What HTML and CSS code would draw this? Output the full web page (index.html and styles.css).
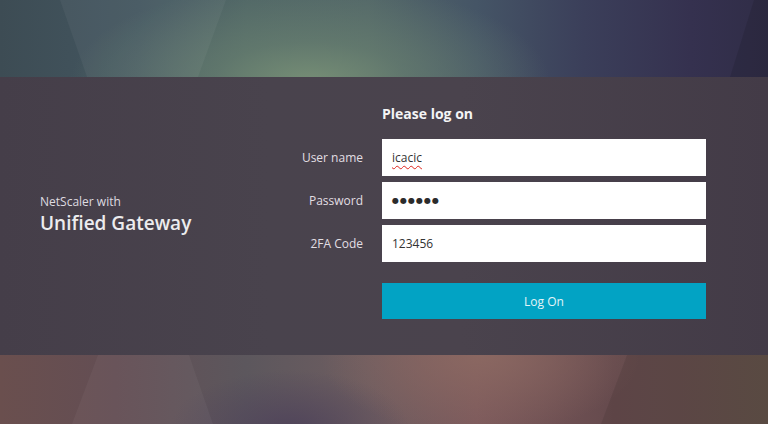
FILE: index.html
```html
<!DOCTYPE html>
<html lang="en">
<head>
<meta charset="utf-8">
<title>NetScaler Gateway</title>
<link rel="stylesheet" href="styles.css">
</head>
<body>
<div class="page">
  <div class="band band-top">
    <div class="shape top-light"></div>
    <div class="shape top-dark"></div>
  </div>
  <main class="panel">
    <section class="brand">
      <div class="brand-small">NetScaler with</div>
      <div class="brand-large">Unified Gateway</div>
    </section>
    <section class="login">
      <h1 class="login-title">Please log on</h1>
      <form class="form">
        <label class="label">User name</label>
        <div class="field"><span class="misspelled">icacic</span></div>
        <label class="label">Password</label>
        <div class="field field-pass">●●●●●●</div>
        <label class="label">2FA Code</label>
        <div class="field">123456</div>
        <div class="button-row">
          <button type="button" class="btn">Log On</button>
        </div>
      </form>
    </section>
  </main>
  <div class="band band-bottom">
    <div class="shape bot-light"></div>
    <div class="shape bot-dark"></div>
  </div>
</div>
</body>
</html>
```

FILE: styles.css
```css
html, body {
  margin: 0;
  padding: 0;
}
body {
  width: 768px;
  height: 424px;
  overflow: hidden;
  font-family: "Open Sans", "Noto Sans", "DejaVu Sans", sans-serif;
  background: #463f4a;
}
.page {
  display: flex;
  flex-direction: column;
  width: 768px;
  height: 424px;
}
.band {
  position: relative;
  overflow: hidden;
  flex: none;
}
.band-top {
  height: 77px;
  background:
    radial-gradient(ellipse 240px 100px at 310px 82px, rgba(120,144,118,0.95) 0%, rgba(108,132,113,0.6) 40%, rgba(90,110,105,0) 100%),
    linear-gradient(to right, #3d4c54 0%, #435660 18%, #4f6566 32%, #526668 48%, #455566 62%, #3b3f5a 76%, #35314f 90%, #302d47 100%);
}
.band-bottom {
  height: 69px;
  background:
    radial-gradient(ellipse 160px 80px at 480px 0px, rgba(140,105,98,0.9) 0%, rgba(140,105,98,0) 100%),
    radial-gradient(ellipse 120px 60px at 290px 75px, rgba(78,66,90,0.9) 0%, rgba(78,66,90,0) 100%),
    linear-gradient(to right, #6a4f4e 0%, #634e54 15%, #5c575d 32%, #6e5d60 48%, #7d5a5c 62%, #654a4d 80%, #615148 100%);
}
.shape {
  position: absolute;
  inset: 0;
}
.top-light {
  background: rgba(255,255,255,0.045);
  clip-path: polygon(60px 0, 226px 0, 198px 77px, 87px 77px);
}
.top-dark {
  background: rgba(0,0,0,0.1);
  clip-path: polygon(754px 0, 768px 0, 768px 77px, 730px 77px);
}
.bot-light {
  background: rgba(255,255,255,0.04);
  clip-path: polygon(98px 0, 189px 0, 213px 69px, 72px 69px);
}
.bot-dark {
  background: rgba(0,0,0,0.08);
  clip-path: polygon(627px 0, 768px 0, 768px 69px, 601px 69px);
}

.panel {
  flex: none;
  height: 278px;
  box-sizing: border-box;
  display: flex;
  align-items: stretch;
  padding: 0 0 0 40px;
  background: linear-gradient(to right, #453e49 0%, #49434d 35%, #4a434d 60%, #433b47 100%);
}
.brand {
  width: 203px;
  display: flex;
  flex-direction: column;
  justify-content: center;
  padding-bottom: 2px;
  box-sizing: border-box;
}
.brand-small {
  font-size: 12px;
  line-height: 15px;
  color: #dedbe0;
}
.brand-large {
  font-size: 19px;
  line-height: 25px;
  font-weight: 600;
  color: #ececee;
  margin-top: 2px;
}
.login {
  padding-top: 26px;
}
.login-title {
  margin: 0 0 15px 139px;
  font-size: 14px;
  line-height: 21px;
  font-weight: 700;
  color: #f4f4f5;
}
.form {
  display: grid;
  grid-template-columns: 120px 324px;
  column-gap: 19px;
  row-gap: 6px;
  align-items: center;
}
.label {
  text-align: right;
  font-size: 12px;
  color: #e2dfe3;
}
.field {
  height: 37px;
  box-sizing: border-box;
  background: #ffffff;
  padding: 0 10px;
  display: flex;
  align-items: center;
  font-size: 12px;
  color: #333333;
}
.misspelled {
  text-decoration: underline wavy #e0261e;
  text-decoration-thickness: 1px;
  text-underline-offset: 3px;
}
.field-pass {
  font-family: "DejaVu Sans", sans-serif;
  font-size: 8px;
  letter-spacing: 1px;
  color: #2b2b2b;
}
.button-row {
  grid-column: 2;
  padding-top: 15px;
}
.btn {
  display: block;
  width: 324px;
  height: 36px;
  border: 0;
  margin: 0;
  background: #02a3c4;
  color: #e3f4f8;
  font-family: "Open Sans", "Noto Sans", sans-serif;
  font-size: 12px;
  cursor: pointer;
}
```
